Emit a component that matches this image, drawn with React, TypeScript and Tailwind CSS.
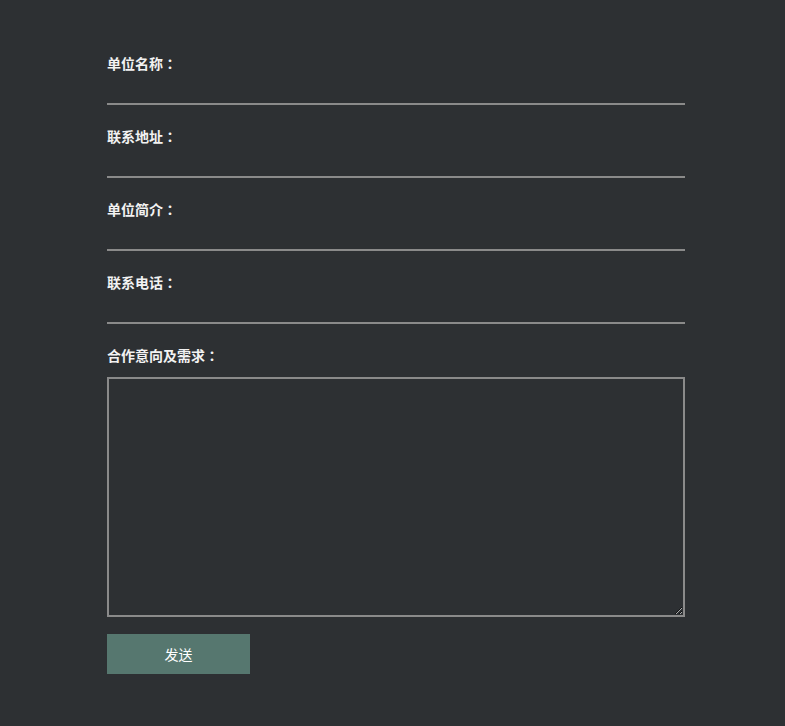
import React from 'react';

const fields = ['单位名称', '联系地址', '单位简介', '联系电话'];

const Label = ({ text }: { text: string }) => (
  <label className="block h-5 text-[14px] leading-5 font-bold text-[#f2f2f2]">
    {text}
    <span className="font-['Noto_Sans_CJK_JP',sans-serif]">：</span>
  </label>
);

export default function App() {
  return (
    <div className="min-h-[726px] w-full bg-[#2d3033] pt-[53px] font-['Microsoft_YaHei','Noto_Sans_CJK_SC',sans-serif]">
      <form className="ml-[107px] w-[578px]" onSubmit={(e) => e.preventDefault()}>
        {fields.map((label) => (
          <div key={label} className="mb-[21px]">
            <Label text={label} />
            <input
              type="text"
              className="block h-[32px] w-full border-b-2 border-[#8a8a8a] bg-transparent text-[14px] text-white outline-none"
            />
          </div>
        ))}
        <Label text="合作意向及需求" />
        <textarea className="mt-[12px] block h-[240px] w-full border-2 border-[#8a8a8a] bg-transparent text-[14px] text-white outline-none" />
        <button
          type="submit"
          className="mt-[17px] h-10 w-[143px] bg-[#56776f] text-[14px] text-white"
        >
          发送
        </button>
      </form>
    </div>
  );
}
